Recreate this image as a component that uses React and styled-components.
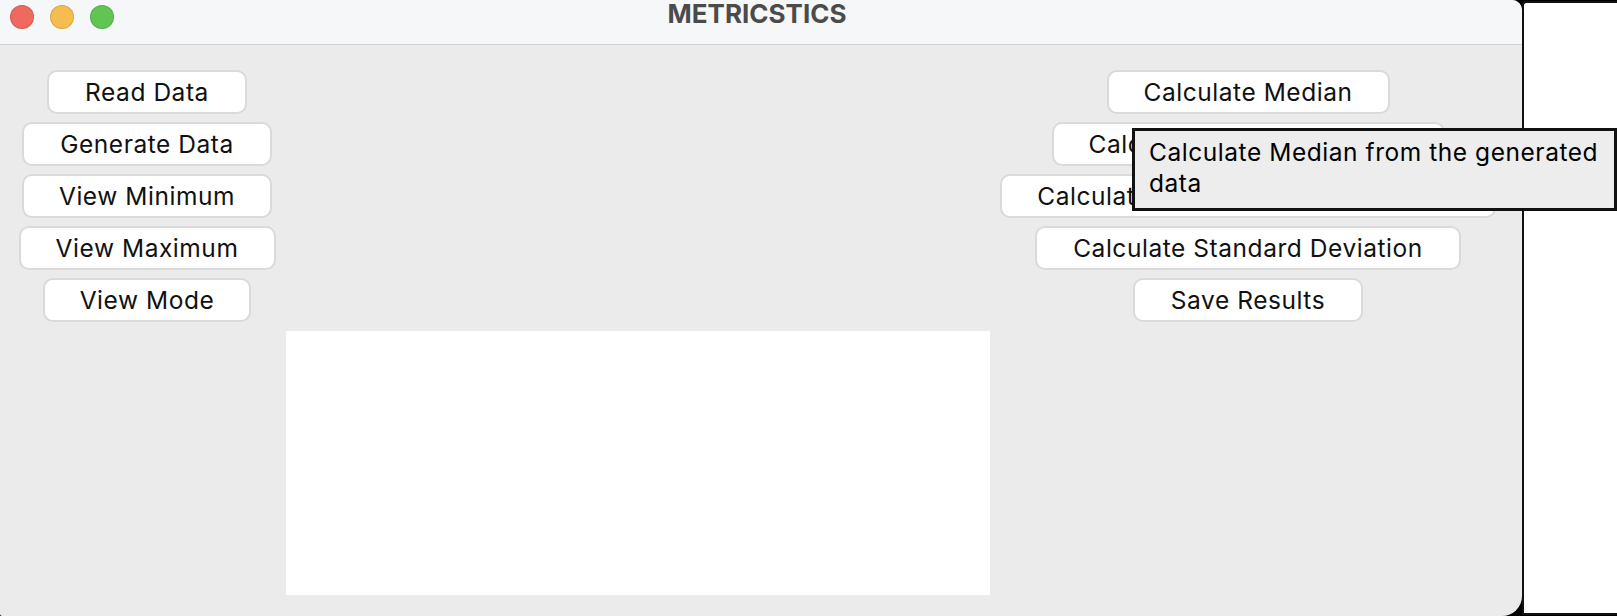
import React from 'react';
import styled, { createGlobalStyle } from 'styled-components';

const GlobalStyle = createGlobalStyle`
  html, body {
    margin: 0;
    padding: 0;
    background: #000;
  }
  body {
    font-family: Inter, "Liberation Sans", sans-serif;
  }
`;

const Screen = styled.div`
  position: relative;
  display: flex;
  width: 1617px;
  height: 616px;
  overflow: hidden;
  background: #000;
`;

const Window = styled.div`
  flex: none;
  width: 1522px;
  display: flex;
  flex-direction: column;
  background: #ebebeb;
  border-radius: 0 10px 20px 2px;
  overflow: hidden;
`;

const TitleBar = styled.div`
  flex: none;
  height: 44px;
  display: grid;
  grid-template-columns: 1fr auto 1fr;
  background: #f6f7f9;
  border-bottom: 1px solid #d2d2d2;
`;

const Lights = styled.div`
  display: flex;
  gap: 16px;
  padding: 5px 0 0 10px;
  align-self: start;
`;

const Light = styled.span`
  width: 24px;
  height: 24px;
  border-radius: 50%;
  background: ${props => props.$color};
  box-shadow: inset 0 0 0 1px rgba(0, 0, 0, 0.12);
`;

const Title = styled.div`
  font: 700 26px/26px Inter, "Liberation Sans", sans-serif;
  color: #4b4b4b;
  padding: 1px 8px 0 0;
`;

const Body = styled.div`
  flex: 1;
  display: grid;
  grid-template-columns: 278px 704px 516px;
  grid-template-rows: auto 264px;
  row-gap: 9px;
  align-content: start;
  padding: 25px 16px 0 8px;
`;

const ButtonColumn = styled.div`
  grid-column: ${props => props.$col};
  grid-row: 1;
  display: flex;
  flex-direction: column;
  align-items: center;
  gap: 8px;
`;

const Button = styled.button`
  box-sizing: border-box;
  width: ${props => props.$w}px;
  height: 44px;
  padding: 0;
  display: flex;
  align-items: center;
  justify-content: center;
  white-space: nowrap;
  overflow: hidden;
  background: #fff;
  border: 2px solid #dadada;
  border-radius: 10px;
  font: 400 24.5px Inter, "Liberation Sans", sans-serif;
  letter-spacing: 0.55px;
  color: #111;
`;

const Output = styled.div`
  grid-column: 2;
  grid-row: 2;
  background: #fff;
`;

const SidePanel = styled.div`
  flex: 1;
  margin: 1px 0;
  background: #fff;
  border: 2px solid #111;
  border-right: none;
  border-top-left-radius: 4px;
`;

const Tooltip = styled.div`
  position: absolute;
  left: 1132px;
  top: 128px;
  box-sizing: border-box;
  width: 485px;
  height: 83px;
  padding: 6px 4px 0 14px;
  background: #ededed;
  border: 3px solid #111;
  font: 400 24.5px/31px Inter, "Liberation Sans", sans-serif;
  letter-spacing: 0.55px;
  color: #000;
`;

const leftButtons = [
  { label: 'Read Data', w: 200 },
  { label: 'Generate Data', w: 250 },
  { label: 'View Minimum', w: 250 },
  { label: 'View Maximum', w: 257 },
  { label: 'View Mode', w: 208 },
];

const rightButtons = [
  { label: 'Calculate Median', w: 283 },
  { label: 'Calculate Arithmetic Mean', w: 393 },
  { label: 'Calculate Mean Absolute Deviation', w: 496 },
  { label: 'Calculate Standard Deviation', w: 426 },
  { label: 'Save Results', w: 230 },
];

const App = () => {
  return (
    <>
      <GlobalStyle />
      <Screen>
        <Window>
          <TitleBar>
            <Lights>
              <Light $color="#ee6a5f" />
              <Light $color="#f5bd4f" />
              <Light $color="#61c554" />
            </Lights>
            <Title>METRICSTICS</Title>
          </TitleBar>

          <Body>
            <ButtonColumn $col={1}>
              {leftButtons.map(b => (
                <Button key={b.label} $w={b.w}>{b.label}</Button>
              ))}
            </ButtonColumn>
            <ButtonColumn $col={3}>
              {rightButtons.map(b => (
                <Button key={b.label} $w={b.w}>{b.label}</Button>
              ))}
            </ButtonColumn>
            <Output />
          </Body>
        </Window>
        <SidePanel />

        <Tooltip>Calculate Median from the generated data</Tooltip>
      </Screen>
    </>
  );
};

export default App;
